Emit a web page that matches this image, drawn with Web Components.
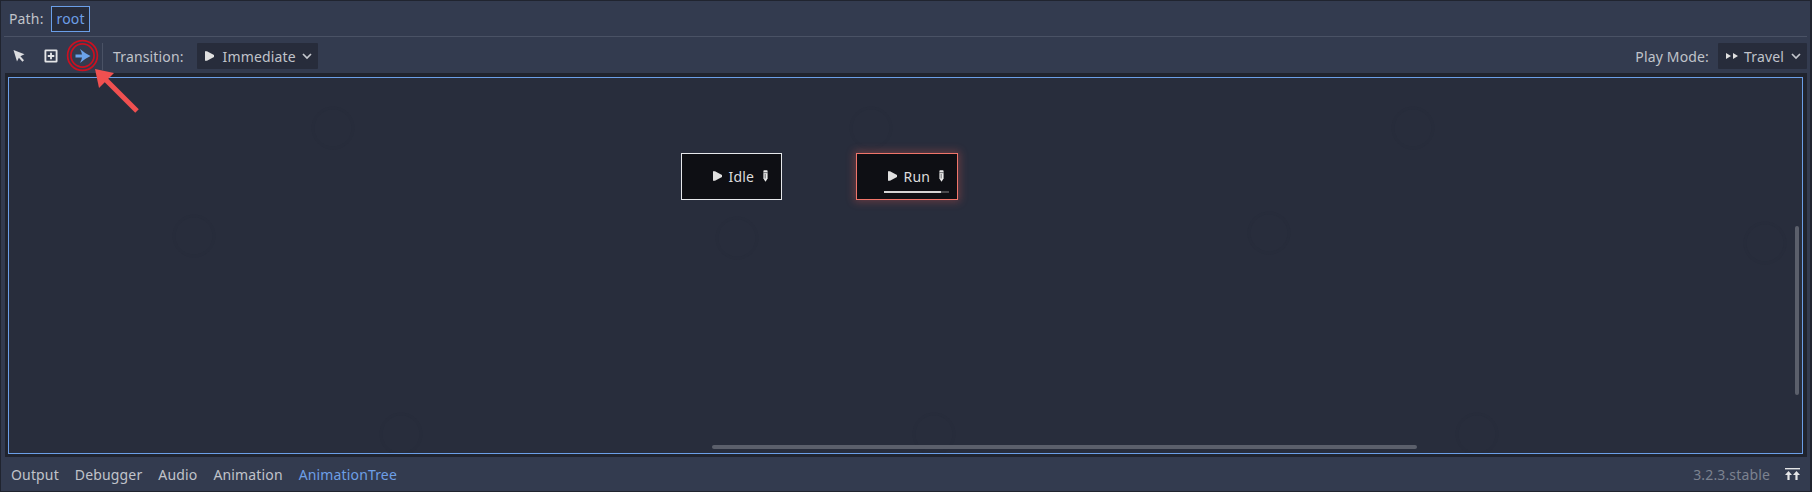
<!DOCTYPE html>
<html>
<head>
<meta charset="utf-8">
<style>
    html, body { margin: 0; height: 100%; background: #20242f; }
    body { font-family: "Noto Sans", sans-serif; font-size: 14px; letter-spacing: .15px; overflow: hidden; }
</style>
</head>
<body>
<gd-editor>
    <gd-bar slot="path" kind="path">
        <span class="lbl">Path:</span>
        <gd-crumb>root</gd-crumb>
    </gd-bar>
    <gd-bar slot="tools" kind="tools">
        <gd-tool icon="select"></gd-tool>
        <gd-tool icon="add"></gd-tool>
        <gd-tool icon="travel"></gd-tool>
        <gd-vsep></gd-vsep>
        <span class="lbl" style="margin-left:10px">Transition:</span>
        <gd-select icon="play" width="121" style="margin-left:13px">Immediate</gd-select>
        <span style="flex:1"></span>
        <span class="lbl">Play Mode:</span>
        <gd-select icon="travel" width="89" style="margin-left:9px;margin-right:3px">Travel</gd-select>
    </gd-bar>
    <gd-graph slot="graph">
        <gd-node style="left:672px;top:75px;width:101px">Idle</gd-node>
        <gd-node active progress="88" style="left:847px;top:75px;width:102px">Run</gd-node>
    </gd-graph>
    <gd-bottom slot="bottom">
        <gd-tab>Output</gd-tab>
        <gd-tab>Debugger</gd-tab>
        <gd-tab>Audio</gd-tab>
        <gd-tab>Animation</gd-tab>
        <gd-tab active>AnimationTree</gd-tab>
    </gd-bottom>
</gd-editor>
<gd-callout></gd-callout>

<script>
const ICONS = {
    play: '<svg width="9" height="10" viewBox="0 0 9 10"><path d="M0 0.3 H2 L9 4 V6 L2 9.7 H0 Z" fill="#e0e0e0"/></svg>',
    travel: '<svg width="14" height="8" viewBox="0 0 14 8"><path d="M1 1 L6 4 L1 7 Z M8 1 L13 4 L8 7 Z" fill="#e0e0e0"/></svg>',
    chevron: '<svg width="10" height="7" viewBox="0 0 10 7"><path d="M1 1 L5 5 L9 1" fill="none" stroke="#c4c7cd" stroke-width="1.7"/></svg>',
    select: '<svg width="14" height="14" viewBox="0 0 14 14"><path d="M1.5 1 L12.5 5.2 L8.4 7.2 L12 11.2 L10.4 12.8 L6.9 8.8 L5 12.6 Z" fill="#dcdde0"/></svg>',
    add: '<svg width="14" height="14" viewBox="0 0 15 15"><path fill-rule="evenodd" d="M2 0.5 H13 Q14.5 0.5 14.5 2 V13 Q14.5 14.5 13 14.5 H2 Q0.5 14.5 0.5 13 V2 Q0.5 0.5 2 0.5 Z M2.5 2.5 V12.5 H12.5 V2.5 Z" fill="#e4e5e7"/><path d="M6.5 4 H8.5 V6.5 H11 V8.5 H8.5 V11 H6.5 V8.5 H4 V6.5 H6.5 Z" fill="#e4e5e7"/></svg>',
    bluetravel: '<svg width="16" height="14" viewBox="0 0 16 14"><path d="M5 0 Q10 4.5 15.5 7 Q10 9.5 5 14 Q7 10 7 8.6 H0.5 V5.4 H7 Q7 4 5 0 Z" fill="#6ba3ec"/></svg>',
    pencil: '<svg width="5" height="14" viewBox="0 0 6 14"><path d="M0.5 1 Q0.5 0 1.5 0 H4.5 Q5.5 0 5.5 1 V10 L3 14 L0.5 10 Z" fill="#ececec"/><path d="M0.5 3 H5.5" fill="none" stroke="#0e0f14" stroke-width="0.7"/><path d="M2.6 4.5 V10" fill="none" stroke="#0e0f14" stroke-width="0.7"/></svg>',
    collapse: '<svg width="15" height="12" viewBox="0 0 15 12"><path d="M0 0 H15 V1.4 H0 Z" fill="#e4e5e7"/><path d="M3.5 3 L7 7 H4.6 V12 H2.4 V7 H0 Z M11.5 3 L15 7 H12.6 V12 H10.4 V7 H8 Z" fill="#e4e5e7"/></svg>'
};

class GdEditor extends HTMLElement {
    constructor() {
        super();
        this.attachShadow({ mode: 'open' });
        this.shadowRoot.innerHTML = `
            <style>
                :host {
                    display: flex;
                    flex-direction: column;
                    box-sizing: border-box;
                    width: 1812px;
                    height: 492px;
                    background: #333b4f;
                    border: 1px solid #20242f;
                    border-right-width: 2px;
                }
                .rule { height: 1px; background: #4a5265; margin: 0 3px; flex: none; }
            </style>
            <slot name="path"></slot>
            <div class="rule"></div>
            <slot name="tools"></slot>
            <slot name="graph"></slot>
            <slot name="bottom"></slot>
        `;
    }
}

class GdBar extends HTMLElement {
    constructor() {
        super();
        this.attachShadow({ mode: 'open' });
        const path = this.getAttribute('kind') === 'path';
        this.shadowRoot.innerHTML = `
            <style>
                :host {
                    display: flex;
                    align-items: center;
                    flex: none;
                    box-sizing: border-box;
                    color: #c0c3ca;
                    height: ${path ? 35 : 36}px;
                    padding-left: ${path ? 8 : 2}px;
                    padding-top: ${path ? 0 : 2}px;
                    ${path ? 'gap: 7px;' : ''}
                }
            </style>
            <slot></slot>
        `;
    }
}

class GdCrumb extends HTMLElement {
    constructor() {
        super();
        this.attachShadow({ mode: 'open' });
        this.shadowRoot.innerHTML = `
            <style>
                :host {
                    display: flex;
                    align-items: center;
                    justify-content: center;
                    box-sizing: border-box;
                    width: 39px;
                    height: 26px;
                    padding-left: 1px;
                    background: #272c3b;
                    border: 1px solid #6b9fe8;
                    color: #6d9fe6;
                }
            </style>
            <slot></slot>
        `;
    }
}

class GdTool extends HTMLElement {
    constructor() {
        super();
        this.attachShadow({ mode: 'open' });
        const name = this.getAttribute('icon');
        this.shadowRoot.innerHTML = `
            <style>
                :host {
                    display: flex;
                    align-items: center;
                    justify-content: center;
                    width: 32px;
                    height: 26px;
                    flex: none;
                }
                svg { display: block; }
            </style>
            ${name === 'travel' ? ICONS.bluetravel : ICONS[name]}
        `;
    }
}

class GdVsep extends HTMLElement {
    constructor() {
        super();
        this.attachShadow({ mode: 'open' });
        this.shadowRoot.innerHTML = `
            <style>
                :host {
                    display: block;
                    width: 1px;
                    height: 27px;
                    margin-left: 3px;
                    background: #4a5265;
                    flex: none;
                }
            </style>
        `;
    }
}

class GdSelect extends HTMLElement {
    constructor() {
        super();
        this.attachShadow({ mode: 'open' });
        const icon = this.getAttribute('icon');
        this.shadowRoot.innerHTML = `
            <style>
                :host {
                    display: flex;
                    align-items: center;
                    box-sizing: border-box;
                    width: ${this.getAttribute('width')}px;
                    height: 26px;
                    flex: none;
                    padding: 0 6px 0 ${icon === 'play' ? 8 : 7}px;
                    background: #272c3b;
                    color: #c0c3ca;
                    border-radius: 1px;
                }
                .txt { margin-left: ${icon === 'play' ? 9 : 5}px; flex: 1; }
                svg { display: block; flex: none; }
            </style>
            ${ICONS[icon]}
            <span class="txt"><slot></slot></span>
            ${ICONS.chevron}
        `;
    }
}

class GdGraph extends HTMLElement {
    constructor() {
        super();
        this.attachShadow({ mode: 'open' });
        // faint logo watermark tiled behind the graph
        const rings = [[324, 50], [862, 50], [1404, 50], [185, 158], [728, 160], [1260, 155], [1756, 165], [392, 356], [925, 356], [1468, 356]];
        const marks = rings.map(([x, y]) =>
            `<circle cx="${x}" cy="${y}" r="20" fill="none" stroke="#232836" stroke-width="3" opacity=".15"/>`).join('');
        this.shadowRoot.innerHTML = `
            <style>
                :host {
                    display: block;
                    flex: none;
                    box-sizing: border-box;
                    height: 384px;
                    margin: 0 3px 0 4px;
                    padding: 4px 4px 3px 3px;
                    background: #20242f;
                }
                .view {
                    position: relative;
                    box-sizing: border-box;
                    height: 100%;
                    background: #282d3c;
                    border: 1px solid #6b9fe8;
                    overflow: hidden;
                }
                .marks { position: absolute; inset: 0; width: 100%; height: 100%; }
                .sb { position: absolute; background: #5b5f6b; border-radius: 2px; }
                .sb.v { left: 1786px; top: 148px; width: 4px; height: 169px; }
                .sb.h { left: 703px; top: 367px; width: 705px; height: 4px; }
                ::slotted(gd-node) { position: absolute; }
            </style>
            <div class="view">
                <svg class="marks">${marks}</svg>
                <slot></slot>
                <div class="sb v"></div>
                <div class="sb h"></div>
            </div>
        `;
    }
}

class GdNode extends HTMLElement {
    constructor() {
        super();
        this.attachShadow({ mode: 'open' });
        const active = this.hasAttribute('active');
        const progress = this.getAttribute('progress');
        this.shadowRoot.innerHTML = `
            <style>
                :host {
                    display: flex;
                    flex-direction: column;
                    box-sizing: border-box;
                    height: 47px;
                    padding: 9px 13px 0 0;
                    background: #0e0f14;
                    border: 1px solid ${active ? '#f0756a' : '#e6e8ec'};
                    color: #dcdcdc;
                    ${active ? 'box-shadow: 0 0 8px 2px rgba(240, 90, 80, .3);' : ''}
                }
                .row {
                    display: flex;
                    align-items: center;
                    justify-content: flex-end;
                    height: 26px;
                    flex: none;
                }
                .name { margin: 0 9px 0 7px; }
                svg { display: block; flex: none; }
                .bar {
                    height: 2px;
                    margin: 2px -5px 0 27px;
                    background: #4a4a4e;
                }
                .bar i { display: block; height: 100%; background: #d4d4d4; }
            </style>
            <div class="row">
                ${ICONS.play}
                <span class="name"><slot></slot></span>
                ${ICONS.pencil}
            </div>
            ${progress ? `<div class="bar"><i style="width:${progress}%"></i></div>` : ''}
        `;
    }
}

class GdBottom extends HTMLElement {
    constructor() {
        super();
        this.attachShadow({ mode: 'open' });
        this.shadowRoot.innerHTML = `
            <style>
                :host {
                    display: flex;
                    align-items: center;
                    flex: 1;
                    gap: 16px;
                    padding: 0 10px 0 10px;
                    color: #c0c3ca;
                }
                .ver { margin-left: auto; margin-right: -1px; color: #7c8290; }
                svg { display: block; }
            </style>
            <slot></slot>
            <span class="ver">3.2.3.stable</span>
            ${ICONS.collapse}
        `;
    }
}

class GdTab extends HTMLElement {
    constructor() {
        super();
        this.attachShadow({ mode: 'open' });
        this.shadowRoot.innerHTML = `
            <style>
                :host { display: block; color: ${this.hasAttribute('active') ? '#6d9fe6' : '#c0c3ca'}; }
            </style>
            <slot></slot>
        `;
    }
}

// red annotation pasted over the screenshot
class GdCallout extends HTMLElement {
    constructor() {
        super();
        this.attachShadow({ mode: 'open' });
        this.shadowRoot.innerHTML = `
            <style>
                :host { position: absolute; left: 0; top: 0; pointer-events: none; }
                svg { display: block; }
            </style>
            <svg width="160" height="130" viewBox="0 0 160 130">
                <circle cx="82.5" cy="55.5" r="14.9" fill="none" stroke="#cc1020" stroke-width="1.7"/>
                <circle cx="82.5" cy="55.5" r="11.6" fill="none" stroke="#cc1020" stroke-width="1.7"/>
                <path d="M137 111 L102 76" stroke="#f05050" stroke-width="5" fill="none"/>
                <path d="M95 69 L114 73 L99 88 Z" fill="#f05050"/>
            </svg>
        `;
    }
}

customElements.define('gd-editor', GdEditor);
customElements.define('gd-bar', GdBar);
customElements.define('gd-crumb', GdCrumb);
customElements.define('gd-tool', GdTool);
customElements.define('gd-vsep', GdVsep);
customElements.define('gd-select', GdSelect);
customElements.define('gd-graph', GdGraph);
customElements.define('gd-node', GdNode);
customElements.define('gd-bottom', GdBottom);
customElements.define('gd-tab', GdTab);
customElements.define('gd-callout', GdCallout);
</script>
</body>
</html>
